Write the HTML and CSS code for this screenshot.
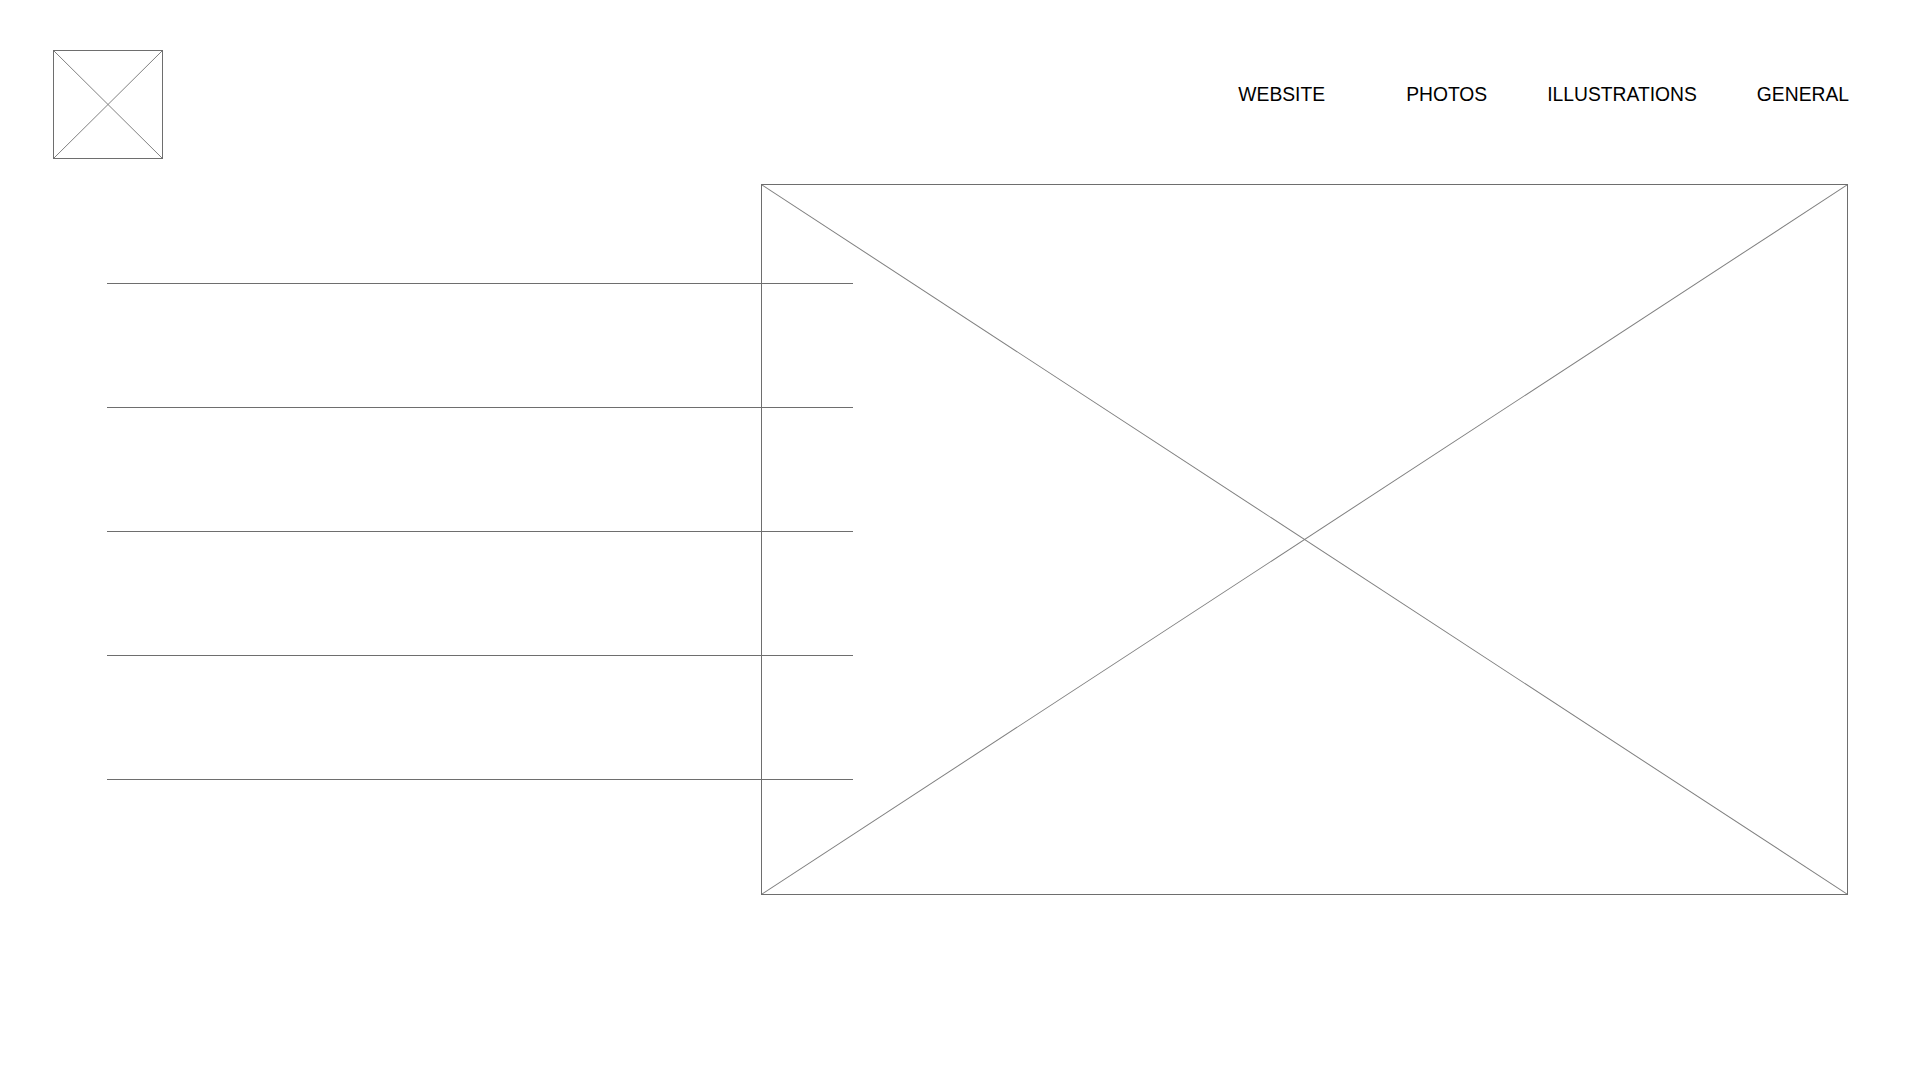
FILE: index.html
```html
<!DOCTYPE html>
<html lang="en">
<head>
<meta charset="utf-8">
<title>Wireframe</title>
<link rel="stylesheet" href="styles.css">
</head>
<body>
<header class="header">
  <div class="logo placeholder">
    <svg class="cross" viewBox="0 0 100 100" preserveAspectRatio="none">
      <line x1="0" y1="0" x2="100" y2="100" vector-effect="non-scaling-stroke"/>
      <line x1="100" y1="0" x2="0" y2="100" vector-effect="non-scaling-stroke"/>
    </svg>
  </div>
  <nav class="nav">
    <a class="nav-item nav-item--first" href="#">WEBSITE</a>
    <a class="nav-item" href="#">PHOTOS</a>
    <a class="nav-item" href="#">ILLUSTRATIONS</a>
    <a class="nav-item" href="#">GENERAL</a>
  </nav>
</header>
<main class="stage">
  <div class="hero placeholder">
    <svg class="cross" viewBox="0 0 100 100" preserveAspectRatio="none">
      <line x1="0" y1="0" x2="100" y2="100" vector-effect="non-scaling-stroke"/>
      <line x1="100" y1="0" x2="0" y2="100" vector-effect="non-scaling-stroke"/>
    </svg>
  </div>
  <div class="rules">
    <div class="rule"></div>
    <div class="rule"></div>
    <div class="rule"></div>
    <div class="rule"></div>
    <div class="rule"></div>
  </div>
</main>
</body>
</html>
```
FILE: styles.css
```css
html, body {
  margin: 0;
  padding: 0;
  background: #ffffff;
}

body {
  width: 1920px;
  height: 1080px;
  overflow: hidden;
  font-family: "Liberation Sans", Arial, Helvetica, sans-serif;
  color: #000000;
}

.header {
  display: flex;
  justify-content: space-between;
  align-items: flex-start;
  padding: 50px 71px 0 53px;
}

.placeholder {
  box-sizing: border-box;
  border: 1px solid #6e6e6e;
}

.cross {
  display: block;
  width: 100%;
  height: 100%;
}

.cross line {
  stroke: #808080;
  stroke-width: 1;
}

.logo {
  width: 110px;
  height: 109px;
}

.nav {
  display: flex;
  gap: 60px;
  margin-top: 34px;
}

.nav-item {
  font-size: 19.3px;
  line-height: 22px;
  color: #000000;
  text-decoration: none;
  letter-spacing: 0;
}

.nav-item--first {
  margin-right: 21px;
}

.stage {
  display: grid;
  grid-template-columns: 654px 92px 995px;
  grid-template-rows: 711px;
  padding-left: 107px;
  margin-top: 25px;
}

.hero {
  grid-column: 2 / 4;
  grid-row: 1;
}

.rules {
  grid-column: 1 / 3;
  grid-row: 1;
  display: flex;
  flex-direction: column;
  gap: 123px;
  padding-top: 99px;
}

.rule {
  height: 1px;
  background: #6e6e6e;
}
```
